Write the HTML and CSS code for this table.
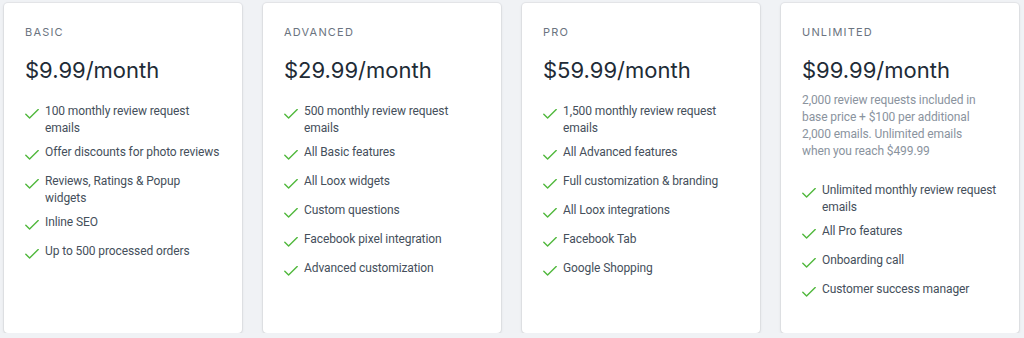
FILE: index.html
```html
<!DOCTYPE html>
<html lang="en">
<head>
<meta charset="utf-8">
<title>Pricing</title>
<link rel="stylesheet" href="styles.css">
</head>
<body>
<svg width="0" height="0" class="defs" aria-hidden="true">
  <defs>
    <symbol id="chk" viewBox="0 0 14 10">
      <path d="M0.8 5.2 L4.6 9 L13.2 0.6" fill="none" stroke="currentColor" stroke-width="1.4" stroke-linecap="round" stroke-linejoin="round"/>
    </symbol>
  </defs>
</svg>
<main class="plans">
  <section class="card">
    <h2 class="plan-name">BASIC</h2>
    <p class="price">$9.99/month</p>
    <ul class="features">
      <li><svg class="check"><use href="#chk"/></svg><span>100 monthly review request emails</span></li>
      <li><svg class="check"><use href="#chk"/></svg><span>Offer discounts for photo reviews</span></li>
      <li><svg class="check"><use href="#chk"/></svg><span>Reviews, Ratings &amp; Popup widgets</span></li>
      <li><svg class="check"><use href="#chk"/></svg><span>Inline SEO</span></li>
      <li><svg class="check"><use href="#chk"/></svg><span>Up to 500 processed orders</span></li>
    </ul>
  </section>
  <section class="card">
    <h2 class="plan-name">ADVANCED</h2>
    <p class="price">$29.99/month</p>
    <ul class="features">
      <li><svg class="check"><use href="#chk"/></svg><span>500 monthly review request emails</span></li>
      <li><svg class="check"><use href="#chk"/></svg><span>All Basic features</span></li>
      <li><svg class="check"><use href="#chk"/></svg><span>All Loox widgets</span></li>
      <li><svg class="check"><use href="#chk"/></svg><span>Custom questions</span></li>
      <li><svg class="check"><use href="#chk"/></svg><span>Facebook pixel integration</span></li>
      <li><svg class="check"><use href="#chk"/></svg><span>Advanced customization</span></li>
    </ul>
  </section>
  <section class="card">
    <h2 class="plan-name">PRO</h2>
    <p class="price">$59.99/month</p>
    <ul class="features">
      <li><svg class="check"><use href="#chk"/></svg><span>1,500 monthly review request emails</span></li>
      <li><svg class="check"><use href="#chk"/></svg><span>All Advanced features</span></li>
      <li><svg class="check"><use href="#chk"/></svg><span>Full customization &amp; branding</span></li>
      <li><svg class="check"><use href="#chk"/></svg><span>All Loox integrations</span></li>
      <li><svg class="check"><use href="#chk"/></svg><span>Facebook Tab</span></li>
      <li><svg class="check"><use href="#chk"/></svg><span>Google Shopping</span></li>
    </ul>
  </section>
  <section class="card">
    <h2 class="plan-name">UNLIMITED</h2>
    <p class="price">$99.99/month</p>
    <p class="desc">2,000 review requests included in base price + $100 per additional 2,000 emails. Unlimited emails when you reach $499.99</p>
    <ul class="features">
      <li><svg class="check"><use href="#chk"/></svg><span>Unlimited monthly review request emails</span></li>
      <li><svg class="check"><use href="#chk"/></svg><span>All Pro features</span></li>
      <li><svg class="check"><use href="#chk"/></svg><span>Onboarding call</span></li>
      <li><svg class="check"><use href="#chk"/></svg><span>Customer success manager</span></li>
    </ul>
  </section>
</main>
</body>
</html>
```
FILE: styles.css
```css
* { box-sizing: border-box; }
html, body {
  margin: 0;
  padding: 0;
  background: #f0f2f5;
  font-family: "Roboto", "Liberation Sans", sans-serif;
}
.defs { position: absolute; width: 0; height: 0; }
.plans {
  display: flex;
  gap: 21px;
  padding: 3px 4px 0 4px;
}
.card {
  width: 238px;
  height: 330px;
  flex: none;
  background: #ffffff;
  border-radius: 4px;
  box-shadow: 0 0 0 1px rgba(63, 63, 68, 0.05), 0 1px 3px 0 rgba(63, 63, 68, 0.15);
  padding: 21px 21px 0 21px;
}
.plan-name {
  margin: 0;
  font-family: "Inter", "Liberation Sans", sans-serif;
  font-size: 11px;
  line-height: 16px;
  font-weight: 400;
  letter-spacing: 1.2px;
  color: #6b7480;
}
.price {
  margin: 16px 0 8px 0;
  font-family: "Inter", "Liberation Sans", sans-serif;
  font-size: 22px;
  line-height: 28px;
  font-weight: 400;
  color: #212b36;
}
.desc {
  max-width: 186px;
  margin: 0 0 11px 0;
  font-size: 12px;
  line-height: 17px;
  letter-spacing: -0.1px;
  color: #8a939e;
}
.features {
  list-style: none;
  margin: 0;
  padding: 11px 0 0 0;
}
.features li {
  display: flex;
  align-items: flex-start;
  gap: 6px;
  min-height: 22px;
  margin-bottom: 7px;
  font-size: 12px;
  line-height: 17px;
  letter-spacing: -0.1px;
  color: #454f5b;
}
.check {
  flex: none;
  width: 14px;
  height: 10px;
  margin-top: 6px;
  color: #50b83c;
}
```
